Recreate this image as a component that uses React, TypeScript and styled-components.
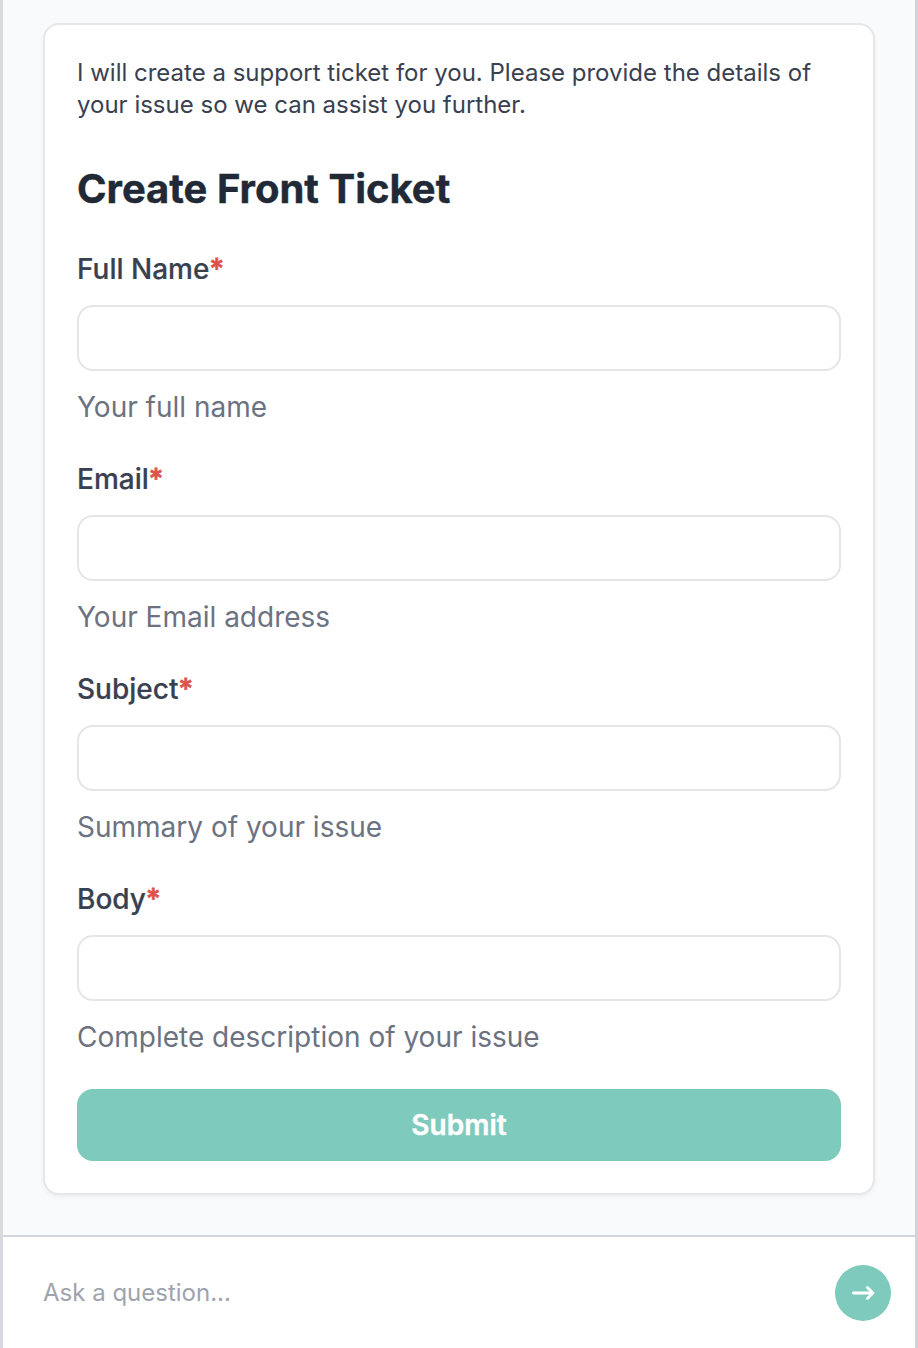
import React from 'react';
import styled, { createGlobalStyle } from 'styled-components';

const GlobalStyle = createGlobalStyle`
  *, *::before, *::after { box-sizing: border-box; }
  body {
    margin: 0;
    font-family: Inter, sans-serif;
    background: #fff;
  }
`;

const Panel = styled.div`
  display: flex;
  flex-direction: column;
  height: 1348px;
  border-left: 3px solid #d9d9df;
  border-right: 3px solid #d1d3da;
`;

const Messages = styled.main`
  flex: 1;
  padding: 23px 40px 0;
  background: #f9fafc;
`;

const Card = styled.section`
  height: 1172px;
  padding: 32px;
  border: 2px solid #e5e7eb;
  border-radius: 16px;
  background: #fff;
  box-shadow: 0 2px 4px rgba(0, 0, 0, 0.05);
`;

const Intro = styled.p`
  margin: 0;
  font-size: 24px;
  line-height: 32px;
  color: #394150;
  white-space: nowrap;
`;

const Title = styled.h2`
  margin: 40px 0 0;
  font-size: 40px;
  line-height: 56px;
  font-weight: 700;
  color: #212936;
  -webkit-text-stroke: 0.4px currentColor;
`;

const Form = styled.form`
  display: flex;
  flex-direction: column;
  gap: 32px;
  margin-top: 32px;
`;

const Field = styled.div`
  display: flex;
  flex-direction: column;
  height: 178px;
`;

const Label = styled.label`
  font-size: 28px;
  line-height: 40px;
  font-weight: 500;
  color: #394150;
  -webkit-text-stroke: 0.2px currentColor;
`;

const Required = styled.span`
  color: #de524c;
  -webkit-text-stroke: 0.8px currentColor;
`;

const Input = styled.input`
  height: 66px;
  margin: 16px 0;
  padding: 0 16px;
  border: 2px solid #e5e5e5;
  border-radius: 16px;
  background: #fff;
  font: inherit;
`;

const Hint = styled.span`
  font-size: 28px;
  line-height: 40px;
  color: #6c727f;
`;

const Submit = styled.button`
  height: 72px;
  border: 0;
  border-radius: 16px;
  background: #7ecabd;
  color: #fff;
  font: 600 28px/40px Inter, sans-serif;
  -webkit-text-stroke: 0.4px currentColor;
`;

const Composer = styled.footer`
  display: flex;
  align-items: center;
  height: 113px;
  padding: 0 24px 0 40px;
  border-top: 2px solid #d2d5da;
  background: #fff;
`;

const Question = styled.input`
  flex: 1;
  padding: 0;
  border: 0;
  outline: 0;
  font: 400 24px/32px Inter, sans-serif;
  &::placeholder { color: #9ea3ae; }
`;

const Send = styled.button`
  display: grid;
  place-items: center;
  width: 56px;
  height: 56px;
  padding: 0;
  border: 0;
  border-radius: 50%;
  background: #7ecabd;
`;

const fields = [
  { label: 'Full Name', hint: 'Your full name' },
  { label: 'Email', hint: 'Your Email address' },
  { label: 'Subject', hint: 'Summary of your issue' },
  { label: 'Body', hint: 'Complete description of your issue' },
];

export default function App() {
  return (
    <>
      <GlobalStyle />
      <Panel>
        <Messages>
          <Card>
            <Intro>
              I will create a support ticket for you. Please provide the details of<br />
              your issue so we can assist you further.
            </Intro>
            <Title>Create Front Ticket</Title>
            <Form>
              {fields.map(({ label, hint }) => (
                <Field key={label}>
                  <Label htmlFor={label}>{label}<Required>*</Required></Label>
                  <Input id={label} />
                  <Hint>{hint}</Hint>
                </Field>
              ))}
              <Submit type="button">Submit</Submit>
            </Form>
          </Card>
        </Messages>
        <Composer>
          <Question placeholder="Ask a question..." />
          <Send aria-label="Send">
            <svg width="28" height="28" viewBox="0 0 28 28" fill="none" stroke="#fff" strokeWidth="2.8" strokeLinecap="round" strokeLinejoin="round">
              <path d="M4.4 14H24M18.4 8.4L24 14l-5.6 5.6" />
            </svg>
          </Send>
        </Composer>
      </Panel>
    </>
  );
}
